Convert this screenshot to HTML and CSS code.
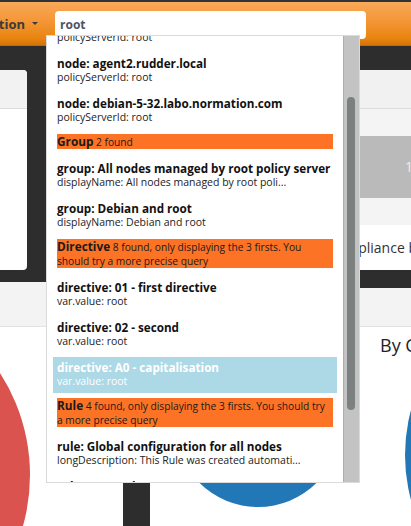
FILE: index.html
```html
<!DOCTYPE html>
<html lang="en">
<head>
    <meta charset="UTF-8">
    <meta name="viewport" content="width=device-width, initial-scale=1.0">
    <title>Rudder - Dashboard</title>
    <link rel="stylesheet" href="styles.css">
</head>
<body>
    <!-- Barre de navigation -->
    <header class="navbar">
        <a class="nav-menu" href="#"><span>Configuration</span><span class="caret"></span></a>
        <input type="text" class="search-input" value="root">
    </header>

    <!-- Haut du tableau de bord -->
    <div class="top-area">
        <div class="sidebar">
            <div class="side-card">
                <div class="side-card-head"></div>
            </div>
        </div>
        <div class="overview">
            <div class="panel">
                <div class="panel-head"></div>
                <div class="panel-body">
                    <div class="stat-box">100%</div>
                </div>
                <div class="compliance-row">Compliance bar</div>
            </div>
        </div>
    </div>

    <!-- Graphiques -->
    <section class="charts">
        <h3 class="chart-title">By Compliance</h3>
        <svg class="chart-canvas" width="411" height="169" viewBox="0 0 411 169">
            <circle cx="-158" cy="118" r="188" fill="#db534e"/>
            <circle cx="258" cy="67" r="83" fill="#2277b7"/>
            <circle cx="577" cy="98" r="172" fill="#2277b7"/>
            <rect x="123" y="60" width="27" height="109" fill="#2d2d2d"/>
        </svg>
    </section>

    <!-- Résultats de recherche -->
    <div class="search-results">
        <div class="results-view">
            <ul class="results-list">
                <li class="category"><b>Node</b> 3 found</li>
                <li class="result">
                    <div class="result-title">node: server.rudder.local</div>
                    <div class="result-desc">policyServerId: root</div>
                </li>
                <li class="result">
                    <div class="result-title">node: agent2.rudder.local</div>
                    <div class="result-desc">policyServerId: root</div>
                </li>
                <li class="result">
                    <div class="result-title">node: debian-5-32.labo.normation.com</div>
                    <div class="result-desc">policyServerId: root</div>
                </li>

                <li class="category"><b>Group</b> 2 found</li>
                <li class="result">
                    <div class="result-title">group: All nodes managed by root policy server</div>
                    <div class="result-desc">displayName: All nodes managed by root poli...</div>
                </li>
                <li class="result">
                    <div class="result-title">group: Debian and root</div>
                    <div class="result-desc">displayName: Debian and root</div>
                </li>

                <li class="category"><b>Directive</b> 8 found, only displaying the 3 firsts. You should try a more precise query</li>
                <li class="result">
                    <div class="result-title">directive: 01 - first directive</div>
                    <div class="result-desc">var.value: root</div>
                </li>
                <li class="result">
                    <div class="result-title">directive: 02 - second</div>
                    <div class="result-desc">var.value: root</div>
                </li>
                <li class="result active">
                    <div class="result-title">directive: A0 - capitalisation</div>
                    <div class="result-desc">var.value: root</div>
                </li>

                <li class="category"><b>Rule</b> 4 found, only displaying the 3 firsts. You should try a more precise query</li>
                <li class="result">
                    <div class="result-title">rule: Global configuration for all nodes</div>
                    <div class="result-desc">longDescription: This Rule was created automati...</div>
                </li>
                <li class="result">
                    <div class="result-title">rule: Root only</div>
                    <div class="result-desc">longDescription: Only on root server</div>
                </li>
            </ul>
        </div>
        <div class="scrollbar">
            <div class="scroll-thumb"></div>
        </div>
    </div>
</body>
</html>
```

FILE: styles.css
```css
/* Rudder - tableau de bord */
body {
    font-family: 'Open Sans', 'DejaVu Sans', sans-serif;
    margin: 0;
    width: 411px;
    height: 526px;
    overflow: hidden;
    background-color: #ffffff;
    color: #222222;
}

/* Barre de navigation */
.navbar {
    box-sizing: border-box;
    height: 46px;
    display: flex;
    align-items: center;
    border-top: 2px solid #30343a;
    border-bottom: 1px solid #c46a08;
    background: linear-gradient(to bottom, #f9a958 0%, #f49636 45%, #e8840f 85%, #d47308 100%);
}

.nav-menu {
    display: flex;
    justify-content: flex-end;
    align-items: center;
    gap: 7px;
    width: 38px;
    padding-right: 7px;
    white-space: nowrap;
    font-size: 13px;
    font-weight: bold;
    color: #3a3a3a;
    text-decoration: none;
}

.caret {
    width: 0;
    height: 0;
    border-top: 3px solid #3a3a3a;
    border-left: 3px solid transparent;
    border-right: 3px solid transparent;
}

.search-input {
    box-sizing: border-box;
    width: 311px;
    height: 28px;
    margin: 2px 0 0 10px;
    padding: 0 5px;
    border: none;
    border-radius: 4px;
    background-color: #ffffff;
    font-family: inherit;
    font-size: 12px;
    font-weight: bold;
    color: #4d5566;
}

/* Haut du tableau de bord */
.top-area {
    display: flex;
    align-items: flex-start;
    height: 280px;
    background-color: #f3f3f3;
    border-bottom: 1px solid #e3e3e3;
}

.sidebar {
    box-sizing: border-box;
    flex-shrink: 0;
    width: 300px;
    height: 236px;
    padding-top: 24px;
    background-color: #2d2d2d;
}

.side-card {
    width: 47px;
    height: 200px;
    margin-left: -20px;
    background-color: #ffffff;
    border-radius: 4px;
    overflow: hidden;
}

.side-card-head {
    height: 38px;
    background-color: #f2f2f2;
    border-bottom: 1px solid #dddddd;
}

.overview {
    flex: 1;
    min-width: 0;
    overflow: hidden;
    height: 242px;
    box-sizing: border-box;
    padding: 24px 0 18px;
    background-color: #2d2d2d;
}

.panel {
    height: 200px;
    background-color: #f4f4f4;
}

.panel-head {
    height: 38px;
    background-color: #f1f1f1;
    border-bottom: 1px solid #dcdcdc;
}

.panel-body {
    padding: 27px 0;
}

.stat-box {
    height: 62px;
    line-height: 62px;
    padding-left: 105px;
    background-color: #bababa;
    color: #ececec;
    font-size: 14px;
    white-space: nowrap;
}

.compliance-row {
    height: 45px;
    line-height: 45px;
    padding-left: 28px;
    background-color: #ffffff;
    color: #333333;
    font-size: 14px;
    white-space: nowrap;
}

/* Graphiques */
.charts {
    padding-top: 6px;
}

.chart-title {
    margin: 0 0 0 380px;
    font-size: 18px;
    font-weight: normal;
    line-height: 24px;
    color: #1c2130;
    white-space: nowrap;
}

.chart-canvas {
    display: block;
}

/* Résultats de recherche */
.search-results {
    position: absolute;
    top: 35px;
    left: 46px;
    box-sizing: border-box;
    width: 314px;
    height: 448px;
    display: flex;
    background-color: #ffffff;
    border: 1px solid #dadada;
}

.results-view {
    flex: 1;
    overflow: hidden;
}

.results-list {
    list-style: none;
    margin: -56.5px 0 0;
    padding: 4px 0;
}

.category {
    margin: 5px 10px 9px;
    background-color: #fd7325;
    color: #1a1a1a;
    font-size: 10.2px;
    line-height: 14px;
}

.category b {
    font-size: 11.8px;
}

.result {
    margin: 0 6px 4px;
    padding: 3px 4px 5px;
    white-space: nowrap;
}

.result-title {
    font-size: 11.7px;
    font-weight: bold;
    line-height: 14px;
    color: #111111;
}

.result-desc {
    font-size: 10.5px;
    line-height: 14px;
    color: #222222;
}

.result.active {
    background-color: #add8e6;
}

.result.active .result-title,
.result.active .result-desc {
    color: #ffffff;
}

.scrollbar {
    box-sizing: border-box;
    width: 16px;
    padding: 61px 0 0 3px;
    background-color: #c3c3c3;
    border-left: 1px solid #adadad;
}

.scroll-thumb {
    width: 8px;
    height: 313px;
    border-radius: 4px;
    background-color: #7d8081;
}
```
